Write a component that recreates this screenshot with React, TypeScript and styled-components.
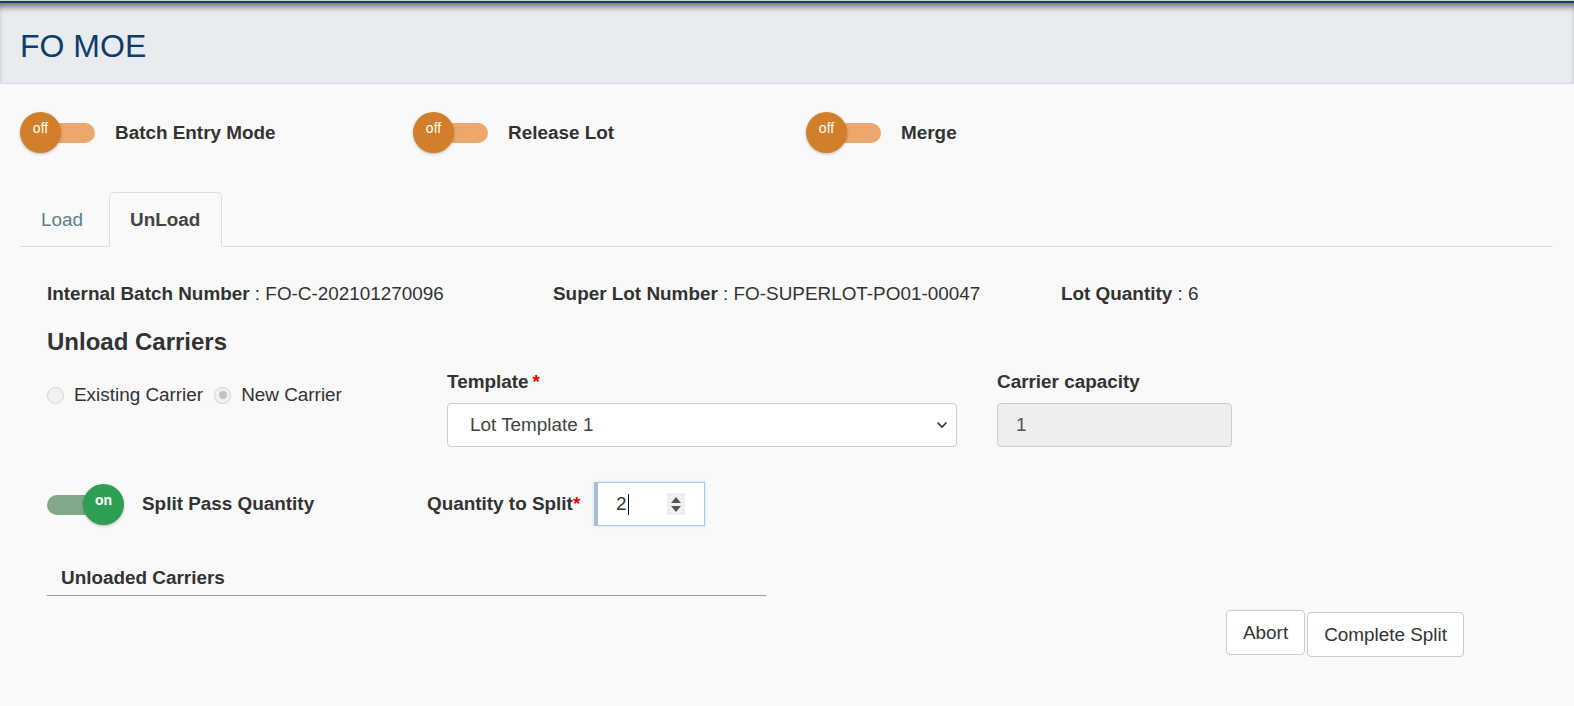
import React from "react";
import styled, { createGlobalStyle } from "styled-components";

const GlobalStyle = createGlobalStyle`
  html, body {
    margin: 0;
    padding: 0;
    background: #f9f9f9;
    font-family: "Liberation Sans", Arial, sans-serif;
    color: #333;
  }
  * { box-sizing: border-box; }
`;

const FS = "18.9px";

const Page = styled.div`
  min-height: 706px;
  background: #f9f9f9;
`;

const TopStripe = styled.div`
  height: 3px;
  border-top: 1px solid #c9d1db;
  background: #123f6c;
`;

const Header = styled.header`
  height: 81px;
  padding: 27px 0 20px 20px;
  background: #e8ebf0;
  border-bottom: 1px solid #d6dae2;
  box-shadow: inset 0 7px 6px -3px rgba(0, 0, 0, 0.5);
`;

const Title = styled.h1`
  margin: 0;
  font-size: 32px;
  line-height: 32px;
  font-weight: 400;
  color: #0f3d68;
`;

const ToggleRow = styled.div`
  display: flex;
  margin-top: 28px;
  padding-left: 20px;
`;

const ToggleGroup = styled.div`
  display: flex;
  align-items: center;
  width: 393px;
`;

const SwitchBox = styled.div<{ $on?: boolean }>`
  position: relative;
  width: ${(p) => (p.$on ? 77 : 76)}px;
  height: 41px;
  flex: none;
`;

const Track = styled.div<{ $on?: boolean }>`
  position: absolute;
  top: 11px;
  height: 20px;
  border-radius: 10px;
  left: ${(p) => (p.$on ? 0 : 20)}px;
  width: ${(p) => (p.$on ? 62 : 55)}px;
  background: ${(p) => (p.$on ? "#80a98a" : "#eda66b")};
`;

const Knob = styled.div<{ $on?: boolean }>`
  position: absolute;
  top: 0;
  left: ${(p) => (p.$on ? 36 : 0)}px;
  width: 41px;
  height: 41px;
  border-radius: 50%;
  background: ${(p) => (p.$on ? "#2e9f52" : "#d17f2a")};
  box-shadow: 0 1px 3px rgba(0, 0, 0, 0.25);
  color: #fff;
  font-size: 14px;
  font-weight: ${(p) => (p.$on ? 700 : 400)};
  text-align: center;
  padding-top: 8px;
  line-height: 16px;
`;

const ToggleLabel = styled.span<{ $gap?: number }>`
  margin-left: ${(p) => p.$gap ?? 19}px;
  font-size: ${FS};
  font-weight: 700;
  color: #333;
`;

const Tabs = styled.div`
  display: flex;
  margin: 39px 21px 0 20px;
  border-bottom: 1px solid #ddd;
`;

const Tab = styled.div<{ $active?: boolean }>`
  height: 55px;
  margin-bottom: -1px;
  margin-right: 4px;
  padding: 0 21px 0 20px;
  display: flex;
  align-items: center;
  font-size: ${FS};
  border: 1px solid ${(p) => (p.$active ? "#ddd" : "transparent")};
  border-bottom-color: transparent;
  border-radius: 5px 5px 0 0;
  background: ${(p) => (p.$active ? "#f9f9f9" : "transparent")};
  color: ${(p) => (p.$active ? "#444" : "#5d7d8c")};
  font-weight: ${(p) => (p.$active ? 700 : 400)};
`;

const Content = styled.div`
  padding-left: 47px;
`;

const InfoRow = styled.div`
  display: flex;
  margin-top: 34px;
  font-size: ${FS};
  line-height: 26px;
`;

const InfoItem = styled.div<{ $w?: number }>`
  width: ${(p) => (p.$w ? `${p.$w}px` : "auto")};
  b { font-weight: 700; }
`;

const SectionTitle = styled.h2`
  margin: 20px 0 0;
  font-size: 24px;
  line-height: 30px;
  font-weight: 700;
  color: #333;
`;

const FormRow = styled.div`
  display: grid;
  grid-template-columns: 400px 550px 1fr;
  margin-top: 12px;
`;

const RadioGroup = styled.div`
  display: flex;
  align-items: center;
  margin-top: 13px;
  height: 26px;
  font-size: ${FS};
  color: #333;
`;

const Radio = styled.span<{ $checked?: boolean }>`
  position: relative;
  width: 17px;
  height: 17px;
  border-radius: 50%;
  border: 1px solid #d3d3d3;
  background: #f1f1f1;
  margin-right: 10px;
  flex: none;
  &::after {
    content: "";
    display: ${(p) => (p.$checked ? "block" : "none")};
    position: absolute;
    left: 3.5px;
    top: 3.5px;
    width: 8px;
    height: 8px;
    border-radius: 50%;
    background: #c2c2c2;
  }
`;

const RadioText = styled.span`
  margin-right: 11px;
`;

const Field = styled.div``;

const FieldLabel = styled.div`
  font-size: ${FS};
  line-height: 26px;
  font-weight: 700;
  color: #333;
  margin-bottom: 8px;
  white-space: nowrap;
`;

const Req = styled.span`
  color: #e00;
  margin-left: 4px;
`;

const SelectBox = styled.div`
  width: 510px;
  height: 44px;
  border: 1px solid #ccc;
  border-radius: 4px;
  background: #fff;
  display: flex;
  align-items: center;
  justify-content: space-between;
  padding: 0 8px 0 22px;
  font-size: ${FS};
  color: #444;
`;

const ReadonlyInput = styled.div`
  width: 235px;
  height: 44px;
  border: 1px solid #ccc;
  border-radius: 4px;
  background: #eee;
  display: flex;
  align-items: center;
  padding-left: 18px;
  font-size: ${FS};
  color: #555;
`;

const SplitRow = styled.div`
  display: flex;
  align-items: center;
  margin-top: 35px;
  height: 44px;
`;

const SplitLeft = styled.div`
  width: 380px;
  display: flex;
  align-items: center;
`;

const QtyLabel = styled.div`
  width: 167px;
  font-size: ${FS};
  font-weight: 700;
  color: #333;
  white-space: nowrap;
`;

const QtyStar = styled.span`
  color: #e00;
`;

const QtyInput = styled.div`
  width: 111px;
  height: 44px;
  background: #fff;
  border: 1px solid #a9c8ea;
  border-left: 4px solid #a7bcd2;
  box-shadow: 0 0 3px rgba(102, 175, 233, 0.35);
  display: flex;
  align-items: center;
  padding-left: 18px;
  font-size: ${FS};
  color: #333;
`;

const Caret = styled.span`
  display: inline-block;
  width: 1px;
  height: 21px;
  background: #111;
  margin-left: 1px;
`;

const Spinner = styled.div`
  margin-left: auto;
  margin-right: 19px;
  width: 18px;
  height: 22px;
  background: #efefef;
  display: flex;
  flex-direction: column;
  align-items: center;
  justify-content: center;
  gap: 3px;
`;

const Unloaded = styled.div`
  width: 719px;
  margin-top: 39px;
  padding: 0 0 4px 14px;
  border-bottom: 1px solid #9a9a9a;
  font-size: ${FS};
  line-height: 26px;
  font-weight: 700;
  color: #333;
`;

const Actions = styled.div`
  display: flex;
  justify-content: flex-end;
  align-items: flex-start;
  gap: 2px;
  padding-right: 110px;
  margin-top: 14px;
`;

const Button = styled.button<{ $offset?: number }>`
  height: 45px;
  padding: 0 16px;
  margin-top: ${(p) => p.$offset ?? 0}px;
  background: #fff;
  border: 1px solid #ccc;
  border-radius: 4px;
  font-family: "Liberation Sans", Arial, sans-serif;
  font-size: ${FS};
  color: #333;
`;

const Switch = ({ on }: { on?: boolean }) => (
  <SwitchBox $on={on}>
    <Track $on={on} />
    <Knob $on={on}>{on ? "on" : "off"}</Knob>
  </SwitchBox>
);

const Chevron = () => (
  <svg width="12" height="8" viewBox="0 0 12 8">
    <path d="M1.5 1.5 L6 6 L10.5 1.5" fill="none" stroke="#333" strokeWidth="1.6" />
  </svg>
);

const Arrows = () => (
  <>
    <svg width="10" height="6" viewBox="0 0 10 6">
      <path d="M0 6 L5 0 L10 6 Z" fill="#555" />
    </svg>
    <svg width="10" height="6" viewBox="0 0 10 6">
      <path d="M0 0 L5 6 L10 0 Z" fill="#555" />
    </svg>
  </>
);

export default function App() {
  return (
    <Page>
      <GlobalStyle />
      <TopStripe />
      <Header>
        <Title>FO MOE</Title>
      </Header>

      <ToggleRow>
        <ToggleGroup>
          <Switch />
          <ToggleLabel>Batch Entry Mode</ToggleLabel>
        </ToggleGroup>
        <ToggleGroup>
          <Switch />
          <ToggleLabel>Release Lot</ToggleLabel>
        </ToggleGroup>
        <ToggleGroup>
          <Switch />
          <ToggleLabel>Merge</ToggleLabel>
        </ToggleGroup>
      </ToggleRow>

      <Tabs>
        <Tab>Load</Tab>
        <Tab $active>UnLoad</Tab>
      </Tabs>

      <Content>
        <InfoRow>
          <InfoItem $w={506}>
            <b>Internal Batch Number</b> : FO-C-202101270096
          </InfoItem>
          <InfoItem $w={508}>
            <b>Super Lot Number</b> : FO-SUPERLOT-PO01-00047
          </InfoItem>
          <InfoItem>
            <b>Lot Quantity</b> : 6
          </InfoItem>
        </InfoRow>

        <SectionTitle>Unload Carriers</SectionTitle>

        <FormRow>
          <RadioGroup>
            <Radio />
            <RadioText>Existing Carrier</RadioText>
            <Radio $checked />
            <RadioText>New Carrier</RadioText>
          </RadioGroup>
          <Field>
            <FieldLabel>
              Template<Req>*</Req>
            </FieldLabel>
            <SelectBox>
              <span>Lot Template 1</span>
              <Chevron />
            </SelectBox>
          </Field>
          <Field>
            <FieldLabel>Carrier capacity</FieldLabel>
            <ReadonlyInput>1</ReadonlyInput>
          </Field>
        </FormRow>

        <SplitRow>
          <SplitLeft>
            <Switch on />
            <ToggleLabel $gap={18}>Split Pass Quantity</ToggleLabel>
          </SplitLeft>
          <QtyLabel>
            Quantity to Split<QtyStar>*</QtyStar>
          </QtyLabel>
          <QtyInput>
            2<Caret />
            <Spinner>
              <Arrows />
            </Spinner>
          </QtyInput>
        </SplitRow>

        <Unloaded>Unloaded Carriers</Unloaded>
      </Content>

      <Actions>
        <Button>Abort</Button>
        <Button $offset={2}>Complete Split</Button>
      </Actions>
    </Page>
  );
}
